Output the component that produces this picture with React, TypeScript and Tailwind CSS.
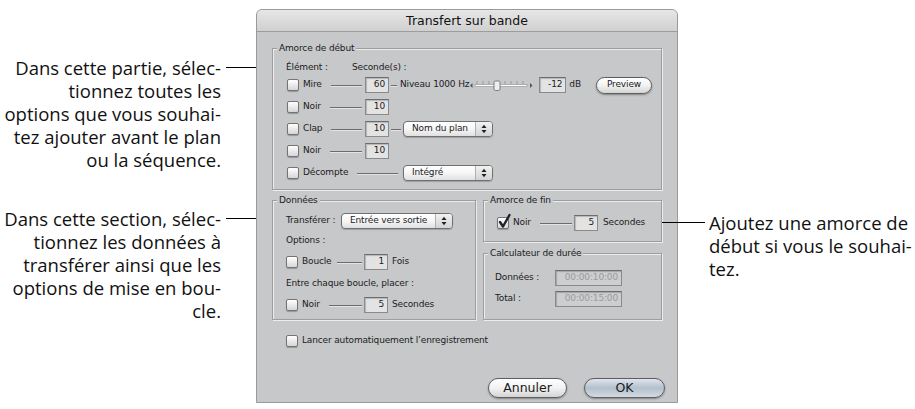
import React from 'react';

const ui = "font-['DejaVu_Sans',sans-serif]";

const Check: React.FC<{ checked?: boolean }> = ({ checked }) => (
  <span className="relative w-[12px] h-[12px] shrink-0 rounded-[2px] border border-[#747474] bg-gradient-to-b from-white to-[#d6d6d6] shadow-[0_1px_1px_rgba(0,0,0,0.25)]">
    {checked && (
      <svg className="absolute left-[0px] top-[-4px] overflow-visible" width="13" height="15" viewBox="0 0 13 15">
        <path d="M2 8 L5 12.5 L11.5 1" fill="none" stroke="#1d2430" strokeWidth="2.4" strokeLinecap="round" strokeLinejoin="round" />
      </svg>
    )}
  </span>
);

const Line: React.FC<{ className?: string }> = ({ className = '' }) => (
  <span className={`h-px bg-[#6c6c6c] shadow-[0_1px_0_#e4e4e4] ${className}`} />
);

const Field: React.FC<{ value: string; className?: string }> = ({ value, className = '' }) => (
  <span
    className={`h-[16px] shrink-0 flex items-center justify-end pr-[3px] border border-[#8a8a8a] border-t-[#6d6d6d] shadow-[inset_1px_1px_1px_rgba(0,0,0,0.2)] ${className}`}
  >
    {value}
  </span>
);

const Arrows = () => (
  <svg width="6" height="10" viewBox="0 0 6 10">
    <path d="M0.5 4 L3 0.8 L5.5 4 Z" fill="#222" />
    <path d="M0.5 6 L3 9.2 L5.5 6 Z" fill="#222" />
  </svg>
);

const Popup: React.FC<{ label: string; className?: string }> = ({ label, className = '' }) => (
  <span
    className={`h-[16px] shrink-0 flex items-center rounded-[4px] border border-[#707070] bg-gradient-to-b from-white via-[#f6f6f6] to-[#e0e0e0] shadow-[0_1px_1px_rgba(0,0,0,0.2)] ${className}`}
  >
    <span className="flex-1 pl-[8px] whitespace-nowrap">{label}</span>
    <span className="w-[17px] h-full flex items-center justify-center border-l border-[#b0b0b0] bg-gradient-to-b from-[#f2f2f2] to-[#d4d4d4] rounded-r-[3px]">
      <Arrows />
    </span>
  </span>
);

const Slider = () => (
  <svg width="66" height="14" viewBox="0 0 66 14" className="shrink-0">
    <path d="M3.5 5 L1 7.5 L3.5 10 Z" fill="#555" />
    <rect x="6" y="6.5" width="52" height="2" fill="#fff" stroke="#8a8a8a" strokeWidth="0.6" />
    {[8, 14, 20, 36, 42, 48, 54].map((x) => (
      <line key={x} x1={x} y1="3" x2={x} y2="6" stroke="#888" strokeWidth="0.7" />
    ))}
    <rect x="25" y="3" width="6" height="9.5" rx="1.5" fill="#eeeeee" stroke="#666" strokeWidth="0.8" />
    <path d="M61 5 L63.5 7.5 L61 10 Z" fill="#555" />
  </svg>
);

const Button: React.FC<{ label: string; primary?: boolean; className?: string }> = ({ label, primary, className = '' }) => (
  <span
    className={`flex items-center justify-center rounded-full border border-[#5e5e5e] text-[#1a1a1a] shadow-[0_1px_2px_rgba(0,0,0,0.35)] ${
      primary
        ? 'bg-gradient-to-b from-[#dfe5ec] via-[#b3c0cd] to-[#d3dbe3]'
        : 'bg-gradient-to-b from-white via-[#f2f2f2] to-[#d4d4d4]'
    } ${className}`}
  >
    {label}
  </span>
);

const Group: React.FC<{ title: string; className?: string; children: React.ReactNode }> = ({ title, className = '', children }) => (
  <div
    className={`relative border border-[#9d9d9f] shadow-[inset_1px_1px_0_#ececec,1px_1px_0_#ececec] ${className}`}
  >
    <span className="absolute top-[-8px] left-[4px] px-[2px] bg-[#c7c8ca] leading-[14px]">{title}</span>
    {children}
  </div>
);

const Callout: React.FC<{ lines: string[]; className?: string }> = ({ lines, className = '' }) => (
  <div className={`flex items-start ${className}`}>
    <p className="w-[221px] shrink-0 flex flex-col items-end text-[18.5px] leading-[23px] text-[#111]">
      {lines.map((l) => (
        <span key={l} className="whitespace-nowrap">
          {l}
        </span>
      ))}
    </p>
    <span className="relative z-10 mt-[11px] ml-[5px] w-[46px] h-px bg-black" />
  </div>
);

const App: React.FC = () => {
  return (
    <div className="w-[915px] h-[409px] overflow-hidden bg-white flex font-['Open_Sans',sans-serif]">
      <div className="w-[256px] shrink-0 pt-[56px] flex flex-col">
        <Callout
          lines={[
            'Dans cette partie, sélec-',
            'tionnez toutes les',
            'options que vous souhai-',
            'tez ajouter avant le plan',
            'ou la séquence.',
          ]}
        />
        <Callout
          className="mt-[36px]"
          lines={[
            'Dans cette section, sélec-',
            'tionnez les données à',
            'transférer ainsi que les',
            'options de mise en bou-',
            'cle.',
          ]}
        />
      </div>

      <div
        className={`${ui} mt-[9px] w-[422px] h-[394px] shrink-0 flex flex-col rounded-t-[6px] border border-[#9a9a9a] bg-[#c7c8ca] text-[9px] tracking-[-0.15px] text-[#1c1c1c]`}
      >
        <div className="h-[22px] shrink-0 rounded-t-[5px] border-b border-[#9c9c9c] bg-gradient-to-b from-[#e6e6e6] to-[#d0d0d0] text-center text-[12.5px] tracking-normal leading-[21px] text-[#111]">
          Transfert sur bande
        </div>

        <div className="flex-1 flex flex-col px-[15px]">
          <Group title="Amorce de début" className="mt-[16px] pt-[12px] pb-[5px] pl-[14px] pr-[9px]">
            <div className="h-[13px] flex items-center ml-[-1px]">
              <span className="w-[66px]">Élément :</span>
              <span>Seconde(s) :</span>
            </div>
            <div className="h-[22px] flex items-center">
              <span className="w-[75px] flex items-center">
                <Check />
                <span className="ml-[4px]">Mire</span>
                <Line className="ml-[9px] flex-1" />
              </span>
              <Field value="60" className="ml-[3px] w-[24px] bg-[#e3e3e3]" />
              <Line className="ml-[2px] w-[6px]" />
              <span className="ml-[3px] whitespace-nowrap">Niveau 1000 Hz</span>
              <Slider />
              <Field value="-12" className="ml-[4px] w-[27px] bg-[#e3e3e3]" />
              <span className="ml-[3px]">dB</span>
              <Button label="Preview" className="ml-auto w-[56px] h-[17px] text-[9px]" />
            </div>
            <div className="h-[22px] flex items-center">
              <span className="w-[75px] flex items-center">
                <Check />
                <span className="ml-[4px]">Noir</span>
                <Line className="ml-[9px] flex-1" />
              </span>
              <Field value="10" className="ml-[3px] w-[24px] bg-[#e3e3e3]" />
            </div>
            <div className="h-[22px] flex items-center">
              <span className="w-[75px] flex items-center">
                <Check />
                <span className="ml-[4px]">Clap</span>
                <Line className="ml-[9px] flex-1" />
              </span>
              <Field value="10" className="ml-[3px] w-[24px] bg-[#e3e3e3]" />
              <Line className="ml-[2px] w-[10px]" />
              <Popup label="Nom du plan" className="ml-[2px] w-[90px]" />
            </div>
            <div className="h-[22px] flex items-center">
              <span className="w-[75px] flex items-center">
                <Check />
                <span className="ml-[4px]">Noir</span>
                <Line className="ml-[9px] flex-1" />
              </span>
              <Field value="10" className="ml-[3px] w-[24px] bg-[#e3e3e3]" />
            </div>
            <div className="h-[22px] flex items-center">
              <span className="w-[111px] flex items-center">
                <Check />
                <span className="ml-[4px]">Décompte</span>
                <Line className="ml-[9px] flex-1" />
              </span>
              <Popup label="Intégré" className="ml-[5px] w-[90px]" />
            </div>
          </Group>

          <div className="mt-[10px] flex items-start">
            <Group title="Données" className="w-[204px] h-[120px] pt-[10px] pl-[13px]">
              <div className="h-[20px] flex items-center">
                <span className="w-[55px] whitespace-nowrap">Transférer :</span>
                <Popup label="Entrée vers sortie" className="w-[112px]" />
              </div>
              <div className="h-[20px] flex items-center">Options :</div>
              <div className="h-[22px] flex items-center">
                <span className="w-[76px] flex items-center">
                  <Check />
                  <span className="ml-[4px]">Boucle</span>
                  <Line className="ml-[6px] flex-1" />
                </span>
                <Field value="1" className="ml-[2px] w-[24px] bg-[#e3e3e3]" />
                <span className="ml-[4px]">Fois</span>
              </div>
              <div className="h-[22px] flex items-center">Entre chaque boucle, placer :</div>
              <div className="h-[20px] flex items-center">
                <span className="w-[76px] flex items-center">
                  <Check />
                  <span className="ml-[4px]">Noir</span>
                  <Line className="ml-[9px] flex-1" />
                </span>
                <Field value="5" className="ml-[2px] w-[24px] bg-[#e3e3e3]" />
                <span className="ml-[4px]">Secondes</span>
              </div>
            </Group>

            <div className="ml-[7px] w-[179px] flex flex-col">
              <Group title="Amorce de fin" className="h-[42px] pt-[12px] pl-[13px]">
                <div className="h-[20px] flex items-center">
                  <span className="w-[75px] flex items-center">
                    <Check checked />
                    <span className="ml-[4px]">Noir</span>
                    <Line className="ml-[9px] flex-1" />
                  </span>
                  <Field value="5" className="ml-[2px] w-[24px] bg-[#e3e3e3]" />
                  <span className="ml-[5px]">Secondes</span>
                </div>
              </Group>
              <Group title="Calculateur de durée" className="mt-[11px] h-[67px] pt-[13px] pl-[11px]">
                <div className="h-[21px] flex items-center">
                  <span className="w-[60px]">Données :</span>
                  <Field value="00:00:10:00" className="w-[67px] h-[14px] text-[#9b9b9b] bg-[#cdced0]" />
                </div>
                <div className="h-[21px] flex items-center">
                  <span className="w-[60px]">Total :</span>
                  <Field value="00:00:15:00" className="w-[67px] h-[14px] text-[#9b9b9b] bg-[#cdced0]" />
                </div>
              </Group>
            </div>
          </div>

          <div className="mt-[11px] h-[20px] flex items-center pl-[14px]">
            <Check />
            <span className="ml-[4px]">Lancer automatiquement l’enregistrement</span>
          </div>

          <div className="mt-[27px] flex justify-end mr-[-3px] text-[12.5px] tracking-normal">
            <Button label="Annuler" className="w-[79px] h-[20px]" />
            <Button label="OK" primary className="ml-[17px] w-[81px] h-[20px]" />
          </div>
        </div>
      </div>

      <div className="flex-1 pt-[211px]">
        <div className="flex items-start">
          <span className="relative z-10 mt-[11px] ml-[-16px] w-[43px] h-px bg-black" />
          <p className="ml-[4px] text-[18.5px] leading-[23px] text-[#111]">
            <span className="block whitespace-nowrap">Ajoutez une amorce de</span>
            <span className="block whitespace-nowrap">début si vous le souhai-</span>
            <span className="block whitespace-nowrap">tez.</span>
          </p>
        </div>
      </div>
    </div>
  );
};

export default App;
